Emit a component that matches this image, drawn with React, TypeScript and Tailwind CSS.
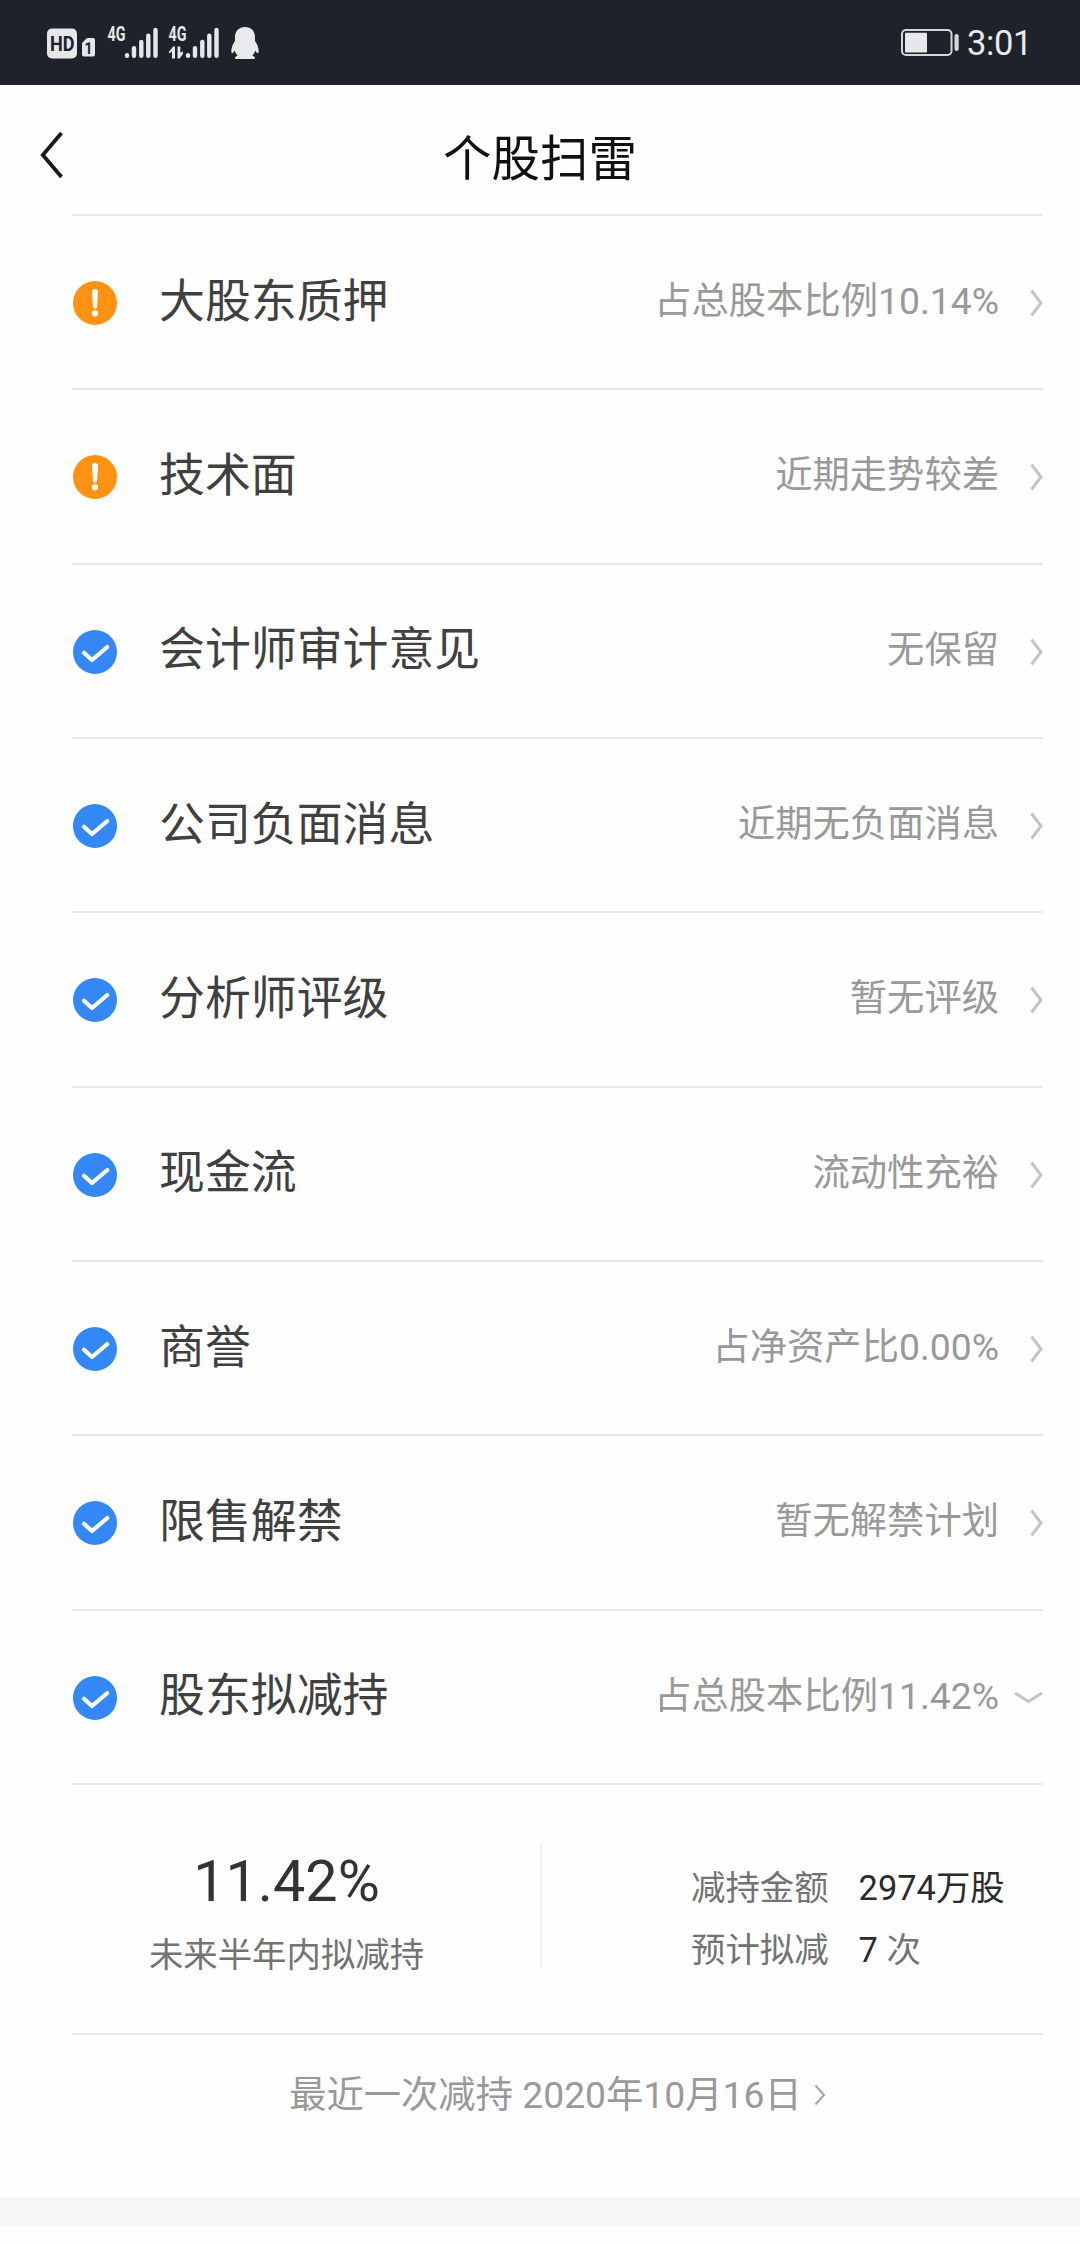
import { useState } from "react";

type Item = {
  name: string;
  value: string;
  warn?: boolean;
};

const items: Item[] = [
  { name: "大股东质押", value: "占总股本比例10.14%", warn: true },
  { name: "技术面", value: "近期走势较差", warn: true },
  { name: "会计师审计意见", value: "无保留" },
  { name: "公司负面消息", value: "近期无负面消息" },
  { name: "分析师评级", value: "暂无评级" },
  { name: "现金流", value: "流动性充裕" },
  { name: "商誉", value: "占净资产比0.00%" },
  { name: "限售解禁", value: "暂无解禁计划" },
  { name: "股东拟减持", value: "占总股本比例11.42%" },
];

const WarnIcon = () => (
  <svg className="size-11 shrink-0" viewBox="0 0 44 44">
    <circle cx="22" cy="22" r="22" fill="#ff9212" />
    <path d="M19 10.500a3 2.600 0 0 1 6 0l-1 15.500a2 1.800 0 0 1-4 0z" fill="#fff" />
    <circle cx="22" cy="32.300" r="3.100" fill="#fff" />
  </svg>
);

const CheckIcon = () => (
  <svg className="size-11 shrink-0" viewBox="0 0 44 44">
    <circle cx="22" cy="22" r="22" fill="#3388f5" />
    <path
      d="M11 22.800l8 7.200L34.300 17"
      fill="none"
      stroke="#fff"
      strokeWidth="4.200"
      strokeLinecap="round"
      strokeLinejoin="round"
    />
  </svg>
);

const HdIcon = () => (
  <svg className="w-[49px] h-9" viewBox="0 0 49 36">
    <rect x="0" y="2.500" width="30" height="30" rx="5" fill="#e6e7e9" />
    <text
      x="3"
      y="24.500"
      fontFamily="Roboto, sans-serif"
      fontWeight="700"
      fontSize="20"
      textLength="24.500"
      lengthAdjust="spacingAndGlyphs"
      fill="#1e222b"
    >
      HD
    </text>
    <path d="M35 17l5-5h6a2 2 0 0 1 2 2v14.500a2 2 0 0 1-2 2h-9a2 2 0 0 1-2-2z" fill="#e6e7e9" />
    <text
      x="37.500"
      y="27.500"
      fontFamily="Roboto, sans-serif"
      fontWeight="700"
      fontSize="16"
      textLength="8"
      lengthAdjust="spacingAndGlyphs"
      fill="#1e222b"
    >
      1
    </text>
  </svg>
);

const SignalIcon = ({ data }: { data?: boolean }) => (
  <svg className="w-[51px] h-11" viewBox="0 -4 51 44">
    <text
      x="0.500"
      y="15"
      fontFamily="Roboto, sans-serif"
      fontWeight="700"
      fontSize="19.500"
      textLength="18"
      lengthAdjust="spacingAndGlyphs"
      fill="#e6e7e9"
    >
      4G
    </text>
    {data && (
      <g fill="#e6e7e9">
        <path d="M.5 26.500l4.500-6h2v12H4v-7l-2 1.500z" />
        <path d="M9.500 20.500h2.800v6.300l2.700-1.600v2.600l-3.300 4.700H9.500z" />
      </g>
    )}
    <g stroke="#e6e7e9" strokeWidth="4.400" strokeLinecap="round">
      <path d="M20 29.300v.4" />
      <path d="M27 22.300v7.500" />
      <path d="M34.300 16v13.800" />
      <path d="M41.300 9.700v20.100" />
      <path d="M48.500 4v25.800" />
    </g>
  </svg>
);

const QQIcon = () => (
  <svg className="w-7 h-9" viewBox="0 0 28 36">
    <path
      d="M14 1C7.800 1 4 5.300 4 11v4C2 18 .3 21.600.3 25c0 1.600.5 2.500 1 2.300.9-.3 1.800-1.500 2.500-2.700.5 2 1.400 3.700 2.800 5.200-1.600.5-2.600 1.200-2.600 2.300 0 .6.400.9 1 .9h18c.6 0 1-.3 1-.9 0-1.100-1-1.800-2.600-2.300 1.400-1.500 2.300-3.200 2.800-5.200.7 1.200 1.600 2.400 2.500 2.700.5.200 1-.7 1-2.300 0-3.400-1.700-7-3.700-10v-4C24 5.300 20.200 1 14 1z"
      fill="#e9eaec"
    />
  </svg>
);

const BatteryIcon = () => (
  <svg className="w-[58px] h-[27px]" viewBox="0 0 58 27">
    <rect x="1" y="1" width="49.500" height="25" rx="4" fill="none" stroke="#d4d6d9" strokeWidth="2" />
    <rect x="4" y="3.700" width="22" height="19.800" rx="1" fill="#e6e7e9" />
    <rect x="53.500" y="5" width="4.200" height="17" rx="2" fill="#d4d6d9" />
  </svg>
);

const StatusBar = () => (
  <div className="h-[85px] bg-[#1e222b] flex items-center justify-between pl-[47px] pr-[48px]">
    <div className="flex items-center pt-0.5">
      <HdIcon />
      <div className="ml-[11px] flex gap-[10px]">
        <SignalIcon />
        <SignalIcon data />
      </div>
      <div className="ml-3 flex">
        <QQIcon />
      </div>
    </div>
    <div className="flex items-center">
      <BatteryIcon />
      <span className="ml-2 text-[34.500px] leading-10 tracking-[-0.4px] text-[#e9eaec]">3:01</span>
    </div>
  </div>
);

const Header = () => (
  <header className="h-[129px] grid grid-cols-[1fr_auto_1fr] items-center px-10 pt-[17px]">
    <button className="w-6 pb-1.5">
      <svg className="w-6 h-12" viewBox="0 0 24 48">
        <path d="M21.500 2L2.800 24l18.700 22" fill="none" stroke="#1a1a1a" strokeWidth="3.800" />
      </svg>
    </button>
    <h1 className="pt-[3px] text-[48.500px] leading-[60px] text-[#111]">个股扫雷</h1>
  </header>
);

const Row = ({ item, open, onClick }: { item: Item; open: boolean; onClick: () => void }) => (
  <li
    className="h-[174.330px] border-b-2 border-[#e8e8e8] flex items-center pl-px pt-0.5"
    onClick={onClick}
  >
    {item.warn ? <WarnIcon /> : <CheckIcon />}
    <span className="ml-[42px] pb-[5px] text-[45.900px] leading-[60px] text-[#404040]">{item.name}</span>
    <span className="ml-auto pb-1 text-[37.300px] leading-[50px] text-[#999]">{item.value}</span>
    {open ? (
      <svg className="ml-[15px] w-[29px] h-3" viewBox="0 0 29 12">
        <path d="M1 1l13.500 8.500L28 1" fill="none" stroke="#c4c4c4" strokeWidth="3" />
      </svg>
    ) : (
      <svg className="ml-[31px] w-[13px] h-7" viewBox="0 0 13 28">
        <path d="M1.500 1.500L11 14l-9.500 12.500" fill="none" stroke="#c4c4c4" strokeWidth="3" />
      </svg>
    )}
  </li>
);

const Detail = () => (
  <div className="h-[250px] border-b-2 border-[#e8e8e8] flex items-center">
    <div className="w-[429px] flex flex-col items-center pt-1.5">
      <p className="text-[57.500px] leading-[70px] text-[#333]">11.42%</p>
      <p className="text-[34.400px] leading-[44px] pt-4 text-[#737373]">未来半年内拟减持</p>
    </div>
    <div className="ml-[39px] mb-[5px] w-0.5 h-[125px] bg-[#efefef]" />
    <div className="ml-[149px] grid grid-cols-[auto_auto] gap-x-[30px] gap-y-[18px] pt-5 text-[34.400px] leading-[44px] text-[#737373]">
      <span>减持金额</span>
      <span className="text-[#2b2b2b]">2974万股</span>
      <span>预计拟减</span>
      <span>
        <span className="text-[#2b2b2b]">7</span> 次
      </span>
    </div>
  </div>
);

const App = () => {
  const [openIndex, setOpenIndex] = useState(items.length - 1);

  return (
    <main className="w-full h-[2244px] bg-[#fefefe] font-['Roboto','Noto_Sans_CJK_SC',sans-serif] overflow-hidden">
      <StatusBar />
      <Header />
      <section className="ml-[72px] mr-[37px]">
        <ul className="border-t-2 border-[#e8e8e8]">
          {items.map((item, index) => (
            <Row
              key={item.name}
              item={item}
              open={index === openIndex}
              onClick={() => setOpenIndex(index)}
            />
          ))}
        </ul>
        <Detail />
        <div className="h-[162px] flex justify-center items-start pt-[35px] text-[#999]">
          <span className="text-[37.300px] leading-[50px]">最近一次减持 2020年10月16日</span>
          <svg className="ml-3 mt-[14px] w-3 h-[22px]" viewBox="0 0 12 22">
            <path d="M1.500 1.500L10 11l-8.500 9.500" fill="none" stroke="#a6a6a6" strokeWidth="2.200" />
          </svg>
        </div>
      </section>
      <div className="h-[29px] bg-[#f7f7f7]" />
    </main>
  );
};

export default App;
